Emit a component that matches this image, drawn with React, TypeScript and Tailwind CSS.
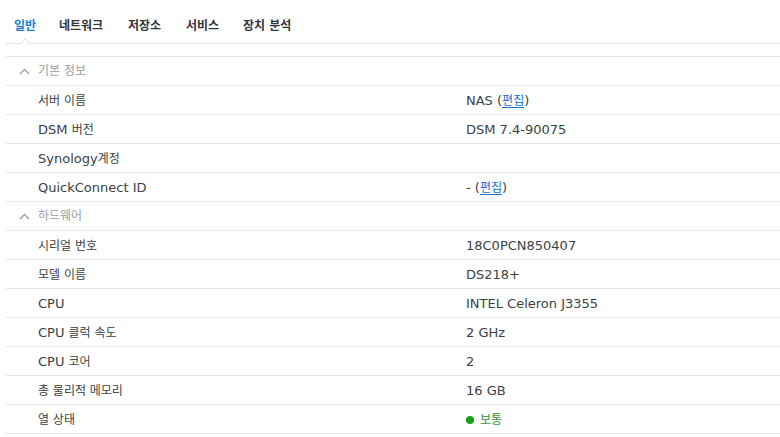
import React from "react"

type Row = { label: string; value?: React.ReactNode }

const HANGUL = /([\uac00-\ud7a3\u3131-\u318e]+(?:\s+[\uac00-\ud7a3\u3131-\u318e]+)*)/

// Korean glyphs render a touch smaller than the Latin text in the original
function Txt({ children }: { children: string }) {
  const parts = children.split(HANGUL)
  return (
    <>
      {parts.map((p, i) =>
        HANGUL.test(p) ? (
          <span key={i} className="text-[12px]">
            {p}
          </span>
        ) : (
          <span key={i}>{p}</span>
        )
      )}
    </>
  )
}

function EditLink() {
  return (
    <>
      (<a className="text-[#1a6fcf] underline underline-offset-2 text-[12px] cursor-pointer">편집</a>)
    </>
  )
}

const tabs = [
  { label: "일반", width: "w-[45px]" },
  { label: "네트워크", width: "w-[69px]" },
  { label: "저장소", width: "w-[58px]" },
  { label: "서비스", width: "w-[57px]" },
  { label: "장치 분석", width: "" },
]

const basicRows: Row[] = [
  { label: "서버 이름", value: <>NAS <EditLink /></> },
  { label: "DSM 버전", value: "DSM 7.4-90075" },
  { label: "Synology계정", value: "" },
  { label: "QuickConnect ID", value: <>- <EditLink /></> },
]

const hardwareRows: Row[] = [
  { label: "시리얼 번호", value: "18C0PCN850407" },
  { label: "모델 이름", value: "DS218+" },
  { label: "CPU", value: "INTEL Celeron J3355" },
  { label: "CPU 클럭 속도", value: "2 GHz" },
  { label: "CPU 코어", value: "2" },
  { label: "총 물리적 메모리", value: "16 GB" },
  {
    label: "열 상태",
    value: (
      <span className="flex items-center text-[#2c9a2c]">
        <span className="w-[8px] h-[8px] rounded-full bg-[#16a016] mr-[6px]" />
        <span className="text-[12px]">보통</span>
      </span>
    ),
  },
]

function SectionHeader({ title }: { title: string }) {
  return (
    <div className="flex items-center h-[29px] border-b border-[#e4e6e8] text-[#9a9ea3]">
      <div className="w-[32px] flex justify-center pl-[4px] pt-[1px]">
        <svg width="11" height="7" viewBox="0 0 11 7" fill="none">
          <path d="M1 6 L5.5 1.5 L10 6" stroke="#9a9ea3" strokeWidth="1.4" />
        </svg>
      </div>
      <span className="text-[12px]">{title}</span>
    </div>
  )
}

function InfoRow({ label, value }: Row) {
  return (
    <div className="flex items-center h-[29px] border-b border-[#e4e6e8] pt-[1px]">
      <div className="w-[460px] pl-[32px]">
        <Txt>{label}</Txt>
      </div>
      <div className="flex-1">{typeof value === "string" ? <Txt>{value}</Txt> : value}</div>
    </div>
  )
}

export default function App() {
  return (
    <div
      className="w-[780px] h-[437px] overflow-hidden bg-white text-[13px] text-[#3a3f44]"
      style={{ fontFamily: '"DejaVu Sans", "Noto Sans CJK KR", sans-serif' }}
    >
      <div className="ml-[6px]">
        {/* Tabs */}
        <div className="relative flex items-center h-[44px] pl-[8px] pt-[9px] border-b border-[#dfe2e5]">
          {tabs.map((t, i) => (
            <span
              key={t.label}
              className={`${t.width} text-[12px] font-bold ${i === 0 ? "text-[#1a7fd4]" : "text-[#2f3438]"}`}
            >
              {t.label}
            </span>
          ))}
          <span className="absolute left-[15px] bottom-[-5px] w-[8px] h-[8px] bg-white border-t border-l border-[#dfe2e5] rotate-45" />
        </div>

        <div className="mt-[12px] border-t border-[#e4e6e8]">
          <SectionHeader title="기본 정보" />
          {basicRows.map((r) => (
            <InfoRow key={r.label} {...r} />
          ))}
          <SectionHeader title="하드웨어" />
          {hardwareRows.map((r) => (
            <InfoRow key={r.label} {...r} />
          ))}
        </div>
      </div>
    </div>
  )
}
